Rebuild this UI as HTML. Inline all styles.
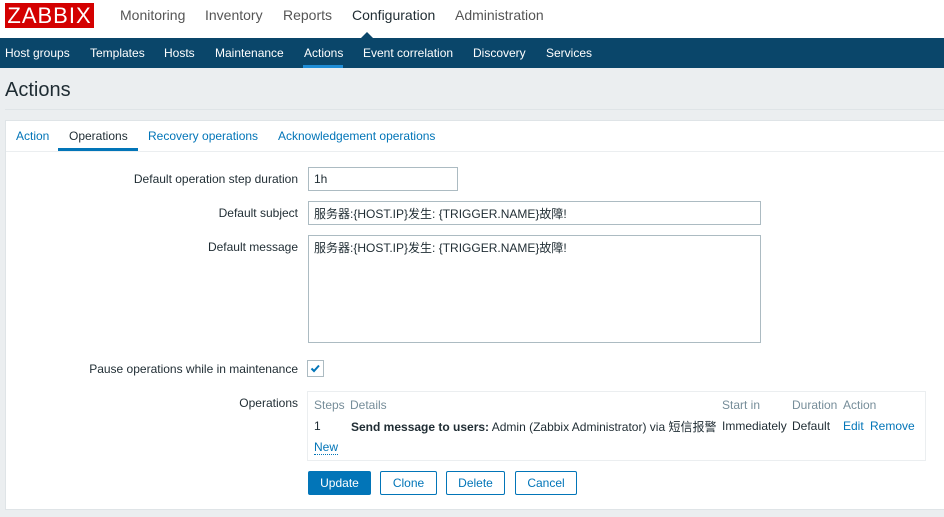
<!DOCTYPE html>
<html><head><meta charset="utf-8"><style>
*{box-sizing:border-box;margin:0;padding:0}
body{width:944px;height:517px;overflow:hidden;background:#ebeef0;font-family:"Liberation Sans","Noto Sans CJK SC",sans-serif;font-size:12px;color:#1f2c33;position:relative}
.a{position:absolute;white-space:nowrap}
.hdr{position:absolute;left:0;top:0;width:944px;height:38px;background:#fff}
.logo{position:absolute;left:5px;top:3px;width:89px;height:25px;background:#d40000;color:#fff;font-size:22px;line-height:25px;text-align:center;letter-spacing:1px}
.top{top:7px;font-size:14px;color:#555}
.nav{position:absolute;left:0;top:38px;width:944px;height:30px;background:#0a466a}
.nav span{position:absolute;top:8px;color:#fff;font-size:12px;white-space:nowrap}
.panel{position:absolute;left:5px;top:120px;width:945px;height:390px;background:#fff;border:1px solid #dfe4e7}
.lbl{text-align:right;right:646px}
input,.ta{position:absolute;border:1px solid #acbbc2;background:#fff;font:12px "Liberation Sans","Noto Sans CJK SC",sans-serif;padding:3px 5px;color:#1f2c33}
.btn{position:absolute;top:471px;height:24px;border:1px solid #0275b8;color:#0275b8;border-radius:2px;text-align:center;line-height:22px;background:#fff}
.lnk{color:#0275b8}
.g{color:#768d99}
</style></head><body>
<div class="hdr">
<div class="logo">ZABBIX</div>
<span class="a top" style="left:120px">Monitoring</span>
<span class="a top" style="left:205px">Inventory</span>
<span class="a top" style="left:283px">Reports</span>
<span class="a top" style="left:352px;color:#1f2c33">Configuration</span>
<span class="a top" style="left:455px">Administration</span>
<div class="a" style="top:32px;width:0;height:0;border-left:6px solid transparent;border-right:6px solid transparent;border-bottom:6px solid #0a466a;left:361px"></div>
</div>
<div class="nav">
<span style="left:5px">Host groups</span><span style="left:90px">Templates</span><span style="left:164px">Hosts</span><span style="left:215px">Maintenance</span><span style="left:304px">Actions</span><span style="left:363px">Event correlation</span><span style="left:473px">Discovery</span><span style="left:546px">Services</span>
<div style="position:absolute;left:303px;top:27px;width:40px;height:3px;background:#1f8dd6"></div>
</div>
<div class="a" style="left:5px;top:79px;font-size:20px;color:#1f2c33">Actions</div>
<div class="a" style="left:5px;top:109px;width:939px;height:1px;background:#dfe4e7"></div>
<div class="panel"></div>
<span class="a lnk" style="left:16px;top:129px">Action</span>
<span class="a" style="left:69px;top:129px">Operations</span>
<span class="a lnk" style="left:148px;top:129px">Recovery operations</span>
<span class="a lnk" style="left:278px;top:129px">Acknowledgement operations</span>
<div class="a" style="left:58px;top:148px;width:80px;height:3px;background:#0275b8"></div>
<div class="a" style="left:6px;top:151px;width:938px;height:1px;background:#ebeef0"></div>
<span class="a lbl" style="top:172px">Default operation step duration</span>
<span class="a lbl" style="top:206px">Default subject</span>
<span class="a lbl" style="top:240px">Default message</span>
<span class="a lbl" style="top:362px">Pause operations while in maintenance</span>
<span class="a lbl" style="top:396px">Operations</span>
<input style="left:308px;top:167px;width:150px;height:24px" value="1h">
<input style="left:308px;top:201px;width:453px;height:24px" value="服务器:{HOST.IP}发生: {TRIGGER.NAME}故障!">
<div class="ta" style="left:308px;top:235px;width:453px;height:108px">服务器:{HOST.IP}发生: {TRIGGER.NAME}故障!</div>
<div class="a" style="left:307px;top:360px;width:17px;height:17px;border:1px solid #acbbc2"><svg width="15" height="15" viewBox="0 0 15 15"><path d="M3.5 7.5l2.5 2.5 5-5.5" stroke="#0275b8" stroke-width="2" fill="none"/></svg></div>
<div class="a" style="left:307px;top:391px;width:619px;height:70px;border:1px solid #ebeef0"></div>
<span class="a g" style="left:314px;top:398px">Steps</span>
<span class="a g" style="left:350px;top:398px">Details</span>
<span class="a g" style="left:722px;top:398px">Start in</span>
<span class="a g" style="left:792px;top:398px">Duration</span>
<span class="a g" style="left:843px;top:398px">Action</span>
<span class="a" style="left:314px;top:419px">1</span>
<span class="a" style="left:351px;top:418px"><b>Send message to users:</b> Admin (Zabbix Administrator) via 短信报警</span>
<span class="a" style="left:722px;top:419px">Immediately</span>
<span class="a" style="left:792px;top:419px">Default</span>
<span class="a lnk" style="left:843px;top:419px">Edit</span>
<span class="a lnk" style="left:870px;top:419px">Remove</span>
<span class="a lnk" style="left:314px;top:440px;border-bottom:1px dotted #0275b8">New</span>
<div class="btn" style="left:308px;width:63px;background:#0275b8;color:#fff">Update</div>
<div class="btn" style="left:380px;width:57px">Clone</div>
<div class="btn" style="left:446px;width:59px">Delete</div>
<div class="btn" style="left:515px;width:62px">Cancel</div>
</body></html>
